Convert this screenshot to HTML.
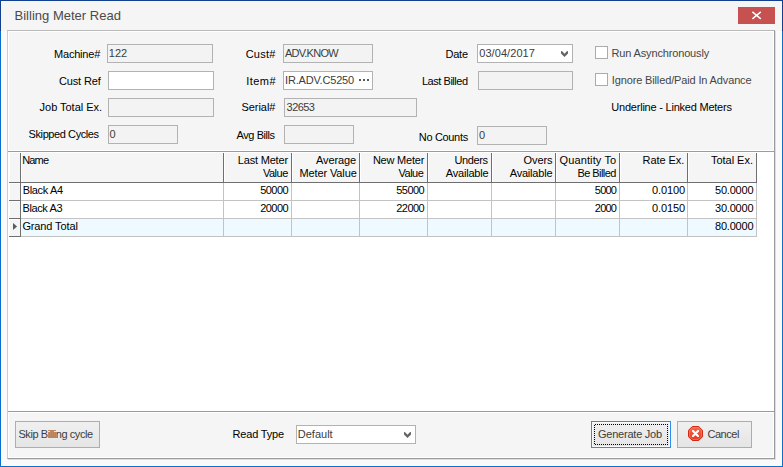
<!DOCTYPE html>
<html><head><meta charset="utf-8">
<style>
*{box-sizing:border-box;margin:0;padding:0}
html,body{width:783px;height:467px;overflow:hidden;background:#fafafa}
body{font-family:"Liberation Sans",sans-serif;font-size:11px;color:#000;position:relative}
.a{position:absolute}
.t{position:absolute;display:block;height:13px;line-height:13px;white-space:nowrap;font-size:11px}
.inp{position:absolute;border:1px solid #b2b2b2;background:#f3f3f3}
.inp.w{background:#fff}
.cb{position:absolute;width:13px;height:13px;border:1px solid #ababab;background:#fff}
.btn{position:absolute;height:27px;border:1px solid #adadad;background:linear-gradient(#f0f0f0,#e5e5e5)}
</style></head><body>
<!-- window frame -->
<div class="a" style="left:0;top:0;width:783px;height:31px;background:#f5f5f5"></div>
<div class="a" style="left:0;top:31px;width:783px;height:436px;background:#fafafa"></div>
<div class="a" style="left:1px;top:31px;width:781px;height:435px;border:1px solid #fff;border-top:0"></div>
<div class="a" style="left:0;top:0;width:783px;height:1px;background:#12408f"></div>
<div class="a" style="left:0;top:0;width:1px;height:31px;background:#12408f"></div>
<div class="a" style="left:0;top:31px;width:1px;height:436px;background:#0b6fd1"></div>
<div class="a" style="left:782px;top:0;width:1px;height:31px;background:#12408f"></div>
<div class="a" style="left:782px;top:31px;width:1px;height:436px;background:#0b6fd1"></div>
<div class="a" style="left:0;top:466px;width:783px;height:1px;background:#0b6fd1"></div>
<div class="a" style="left:738px;top:7px;width:37px;height:17px;background:#c75050"><svg width="37" height="17" viewBox="0 0 37 17" style="display:block"><path d="M14.4 4.8 L22.8 11.8 M22.8 4.8 L14.4 11.8" stroke="#fff" stroke-width="1.5" fill="none"/></svg></div>
<!-- panel: shadow, border, inner white -->
<div class="a" style="left:8px;top:31px;width:768px;height:429px;background:#dedede"></div>
<div class="a" style="left:7px;top:30px;width:768px;height:429px;background:#f5f5f5;border:1px solid #9a9a9a;border-top-color:#b9b9b9;border-left-color:#cdcdcd"></div>
<div class="a" style="left:8px;top:31px;width:766px;height:427px;border:1px solid #fff"></div>
<div class="inp" style="left:107px;top:44px;width:106px;height:19px"></div>
<div class="inp w" style="left:108px;top:71px;width:106px;height:19px"></div>
<div class="inp" style="left:108px;top:98px;width:106px;height:19px"></div>
<div class="inp" style="left:108px;top:125px;width:70px;height:19px"></div>
<div class="inp" style="left:283px;top:44px;width:90px;height:19px"></div>
<div class="inp w" style="left:283px;top:71px;width:90px;height:19px"></div>
<div class="inp" style="left:284px;top:98px;width:133px;height:19px"></div>
<div class="inp" style="left:284px;top:125px;width:70px;height:19px"></div>
<div class="inp w" style="left:477px;top:44px;width:96px;height:19px"></div>
<div class="inp" style="left:478px;top:71px;width:95px;height:19px"></div>
<div class="inp" style="left:477px;top:126px;width:70px;height:19px"></div>
<div class="inp w" style="left:296px;top:425px;width:120px;height:19px"></div>
<svg class="a" style="left:561px;top:51px" width="7" height="6" viewBox="0 0 7 6"><path d="M0 0.2 L0.9 0 L3.5 2.7 L6.1 0 L7 0.2 L7 2.5 L3.5 6 L0 2.5 Z" fill="#646464"/></svg>
<svg class="a" style="left:404px;top:432px" width="7" height="6" viewBox="0 0 7 6"><path d="M0 0.2 L0.9 0 L3.5 2.7 L6.1 0 L7 0.2 L7 2.5 L3.5 6 L0 2.5 Z" fill="#646464"/></svg>
<div class="a" style="left:359px;top:79px;width:2px;height:2px;background:#5a5a5a"></div>
<div class="a" style="left:363px;top:79px;width:2px;height:2px;background:#5a5a5a"></div>
<div class="a" style="left:367px;top:79px;width:2px;height:2px;background:#5a5a5a"></div>
<div class="cb" style="left:595px;top:46px"></div>
<div class="cb" style="left:595px;top:73px"></div>
<!-- grid -->
<div class="a" style="left:8px;top:151px;width:766px;height:260px;background:#fff"></div>
<div class="a" style="left:8px;top:150px;width:766px;height:1px;background:#fff"></div>
<div class="a" style="left:8px;top:151px;width:766px;height:1px;background:#9c9c9c"></div>
<div class="a" style="left:10px;top:153px;width:746px;height:29px;background:#f5f5f5"></div>
<div class="a" style="left:21px;top:219px;width:735px;height:17px;background:#eefaff"></div>
<div class="a" style="left:10px;top:183px;width:10px;height:53px;background:#f5f5f5"></div>
<div class="a" style="left:9px;top:182px;width:748px;height:1px;background:#6f6f6f"></div>
<div class="a" style="left:21px;top:200px;width:736px;height:1px;background:#c3c3c3"></div>
<div class="a" style="left:9px;top:200px;width:12px;height:1px;background:#6f6f6f"></div>
<div class="a" style="left:21px;top:218px;width:736px;height:1px;background:#c3c3c3"></div>
<div class="a" style="left:9px;top:218px;width:12px;height:1px;background:#6f6f6f"></div>
<div class="a" style="left:21px;top:236px;width:736px;height:1px;background:#c3c3c3"></div>
<div class="a" style="left:9px;top:236px;width:12px;height:1px;background:#6f6f6f"></div>
<div class="a" style="left:9px;top:183px;width:11px;height:1px;background:#fff"></div>
<div class="a" style="left:9px;top:201px;width:11px;height:1px;background:#fff"></div>
<div class="a" style="left:9px;top:219px;width:11px;height:1px;background:#fff"></div>
<div class="a" style="left:20px;top:153px;width:1px;height:30px;background:#6f6f6f"></div>
<div class="a" style="left:21px;top:153px;width:1px;height:29px;background:#fff"></div>
<div class="a" style="left:20px;top:183px;width:1px;height:54px;background:#6f6f6f"></div>
<div class="a" style="left:223px;top:153px;width:1px;height:30px;background:#6f6f6f"></div>
<div class="a" style="left:224px;top:153px;width:1px;height:29px;background:#fff"></div>
<div class="a" style="left:223px;top:183px;width:1px;height:54px;background:#c3c3c3"></div>
<div class="a" style="left:291px;top:153px;width:1px;height:30px;background:#6f6f6f"></div>
<div class="a" style="left:292px;top:153px;width:1px;height:29px;background:#fff"></div>
<div class="a" style="left:291px;top:183px;width:1px;height:54px;background:#c3c3c3"></div>
<div class="a" style="left:359px;top:153px;width:1px;height:30px;background:#6f6f6f"></div>
<div class="a" style="left:360px;top:153px;width:1px;height:29px;background:#fff"></div>
<div class="a" style="left:359px;top:183px;width:1px;height:54px;background:#c3c3c3"></div>
<div class="a" style="left:427px;top:153px;width:1px;height:30px;background:#6f6f6f"></div>
<div class="a" style="left:428px;top:153px;width:1px;height:29px;background:#fff"></div>
<div class="a" style="left:427px;top:183px;width:1px;height:54px;background:#c3c3c3"></div>
<div class="a" style="left:491px;top:153px;width:1px;height:30px;background:#6f6f6f"></div>
<div class="a" style="left:492px;top:153px;width:1px;height:29px;background:#fff"></div>
<div class="a" style="left:491px;top:183px;width:1px;height:54px;background:#c3c3c3"></div>
<div class="a" style="left:555px;top:153px;width:1px;height:30px;background:#6f6f6f"></div>
<div class="a" style="left:556px;top:153px;width:1px;height:29px;background:#fff"></div>
<div class="a" style="left:555px;top:183px;width:1px;height:54px;background:#c3c3c3"></div>
<div class="a" style="left:619px;top:153px;width:1px;height:30px;background:#6f6f6f"></div>
<div class="a" style="left:620px;top:153px;width:1px;height:29px;background:#fff"></div>
<div class="a" style="left:619px;top:183px;width:1px;height:54px;background:#c3c3c3"></div>
<div class="a" style="left:687px;top:153px;width:1px;height:30px;background:#6f6f6f"></div>
<div class="a" style="left:688px;top:153px;width:1px;height:29px;background:#fff"></div>
<div class="a" style="left:687px;top:183px;width:1px;height:54px;background:#c3c3c3"></div>
<div class="a" style="left:756px;top:153px;width:1px;height:30px;background:#6f6f6f"></div>
<div class="a" style="left:756px;top:183px;width:1px;height:54px;background:#c3c3c3"></div>
<svg class="a" style="left:12px;top:222px" width="6" height="9" viewBox="0 0 6 9"><path d="M1 0.9 L5.1 4.5 L1 8.1 Z" fill="#5c5c5c"/></svg>
<div class="a" style="left:8px;top:411px;width:766px;height:1px;background:#9c9c9c"></div>
<div class="a" style="left:8px;top:412px;width:766px;height:1px;background:#fff"></div>
<!-- buttons -->
<div class="btn" style="left:15px;top:421px;width:85px"></div>
<div class="btn" style="left:591px;top:421px;width:80px;border-color:#2f8cf0;box-shadow:inset 0 0 0 1px #f7f9fb"></div>
<div class="a" style="left:595px;top:424px;width:73px;height:1px;background:repeating-linear-gradient(to right,#000 0,#000 1px,transparent 1px,transparent 2px)"></div>
<div class="a" style="left:595px;top:444px;width:73px;height:1px;background:repeating-linear-gradient(to right,#000 0,#000 1px,transparent 1px,transparent 2px)"></div>
<div class="a" style="left:594px;top:425px;width:1px;height:19px;background:repeating-linear-gradient(to bottom,#000 0,#000 1px,transparent 1px,transparent 2px)"></div>
<div class="a" style="left:667px;top:424px;width:1px;height:21px;background:repeating-linear-gradient(to bottom,#000 0,#000 1px,transparent 1px,transparent 2px)"></div>
<div class="btn" style="left:677px;top:421px;width:75px"></div>
<svg class="a" style="left:688px;top:426px" width="15" height="16" viewBox="0 0 15 16">
<defs><linearGradient id="rg" x1="0" y1="0" x2="0" y2="1"><stop offset="0" stop-color="#f5664c"/><stop offset="1" stop-color="#e4321a"/></linearGradient></defs>
<path d="M4.3 1 H10.7 L14.5 4.8 V11.2 L10.7 15 H4.3 L0.5 11.2 V4.8 Z" fill="#d8d8d8" opacity="0.6"/>
<path d="M4.3 0.5 H10.7 L14.5 4.3 V10.7 L10.7 14.5 H4.3 L0.5 10.7 V4.3 Z" fill="url(#rg)" stroke="#d22a12" stroke-width="1"/>
<path d="M4.8 1.6 H10.2 L13.4 4.8 V10.2 L10.2 13.4 H4.8 L1.6 10.2 V4.8 Z" fill="none" stroke="#f98a74" stroke-width="0.9" opacity="0.75"/>
<path d="M5 5 L10 10 M10 5 L5 10" stroke="#fff" stroke-width="2.3" stroke-linecap="round"/>
</svg>
<span class="t" style="left:14.5px;top:9px;letter-spacing:0.01px;font-size:13px;color:#4a4a4a">Billing Meter Read</span>
<span class="t" style="left:54.0px;top:48px;letter-spacing:-0.2px">Machine#</span>
<span class="t" style="left:58.9px;top:75px;letter-spacing:-0.11px">Cust Ref</span>
<span class="t" style="left:39.6px;top:101px;letter-spacing:-0.03px">Job Total Ex.</span>
<span class="t" style="left:28.6px;top:128px;letter-spacing:-0.41px">Skipped Cycles</span>
<span class="t" style="left:245.7px;top:48px;letter-spacing:0.23px">Cust#</span>
<span class="t" style="left:246.2px;top:75px;letter-spacing:0.48px">Item#</span>
<span class="t" style="left:241.5px;top:101px;letter-spacing:-0.05px">Serial#</span>
<span class="t" style="left:236.6px;top:129px;letter-spacing:-0.44px">Avg Bills</span>
<span class="t" style="left:445.4px;top:48px;letter-spacing:-0.2px">Date</span>
<span class="t" style="left:421.9px;top:75px;letter-spacing:-0.45px">Last Billed</span>
<span class="t" style="left:418.8px;top:131px;letter-spacing:-0.33px">No Counts</span>
<span class="t" style="left:611.5px;top:47px;letter-spacing:-0.15px;color:#454545">Run Asynchronously</span>
<span class="t" style="left:611.8px;top:74px;letter-spacing:-0.14px;color:#454545">Ignore Billed/Paid In Advance</span>
<span class="t" style="left:611.3px;top:101px;letter-spacing:-0.22px">Underline - Linked Meters</span>
<span class="t" style="left:232.5px;top:428px;letter-spacing:-0.17px">Read Type</span>
<span class="t" style="left:108.8px;top:47px;color:#3c3c3c">122</span>
<span class="t" style="left:109.5px;top:128px;color:#3c3c3c">0</span>
<span class="t" style="left:285.0px;top:47px;letter-spacing:-0.76px;color:#3c3c3c">ADV.KNOW</span>
<span class="t" style="left:285.0px;top:74px;letter-spacing:-0.18px;color:#3c3c3c">IR.ADV.C5250</span>
<span class="t" style="left:286.6px;top:101px;letter-spacing:-0.58px;color:#3c3c3c">32653</span>
<span class="t" style="left:479.2px;top:47px;letter-spacing:0.07px;color:#3c3c3c">03/04/2017</span>
<span class="t" style="left:478.9px;top:129px;color:#3c3c3c">0</span>
<span class="t" style="left:297.8px;top:428px;color:#3c3c3c">Default</span>
<span class="t" style="left:18.4px;top:428px;letter-spacing:-0.42px;color:#3c3c3c">Skip Billing cycle</span>
<span class="t" style="left:598.0px;top:428px;letter-spacing:-0.23px;color:#3c3c3c">Generate Job</span>
<span class="t" style="left:707.5px;top:428px;letter-spacing:-0.48px;color:#3c3c3c">Cancel</span>
<span class="t" style="left:22.2px;top:154px;letter-spacing:-0.83px">Name</span>
<span class="t" style="left:237.8px;top:154px;letter-spacing:-0.19px">Last Meter</span>
<span class="t" style="left:262.9px;top:167px;letter-spacing:-0.47px">Value</span>
<span class="t" style="left:316.1px;top:154px;letter-spacing:-0.12px">Average</span>
<span class="t" style="left:299.4px;top:167px;letter-spacing:-0.11px">Meter Value</span>
<span class="t" style="left:372.9px;top:154px;letter-spacing:-0.21px">New Meter</span>
<span class="t" style="left:398.4px;top:167px;letter-spacing:-0.45px">Value</span>
<span class="t" style="left:454.5px;top:154px;letter-spacing:-0.4px">Unders</span>
<span class="t" style="left:445.8px;top:167px;letter-spacing:-0.2px">Available</span>
<span class="t" style="left:523.6px;top:154px;letter-spacing:-0.1px">Overs</span>
<span class="t" style="left:509.7px;top:167px;letter-spacing:-0.2px">Available</span>
<span class="t" style="left:559.5px;top:154px;letter-spacing:0.12px">Quantity To</span>
<span class="t" style="left:577.4px;top:167px;letter-spacing:-0.56px">Be Billed</span>
<span class="t" style="left:642.5px;top:154px;letter-spacing:-0.06px">Rate Ex.</span>
<span class="t" style="left:711.0px;top:154px;letter-spacing:-0.03px">Total Ex.</span>
<span class="t" style="left:22.8px;top:184px;letter-spacing:-0.36px">Black A4</span>
<span class="t" style="left:22.6px;top:202px;letter-spacing:-0.41px">Black A3</span>
<span class="t" style="left:22.4px;top:220px;letter-spacing:-0.12px">Grand Total</span>
<span class="t" style="left:260.2px;top:184px;letter-spacing:-0.55px">50000</span>
<span class="t" style="left:260.2px;top:202px;letter-spacing:-0.55px">20000</span>
<span class="t" style="left:396.3px;top:184px;letter-spacing:-0.55px">55000</span>
<span class="t" style="left:396.3px;top:202px;letter-spacing:-0.55px">22000</span>
<span class="t" style="left:594.8px;top:184px;letter-spacing:-0.77px">5000</span>
<span class="t" style="left:594.8px;top:202px;letter-spacing:-0.77px">2000</span>
<span class="t" style="left:652.1px;top:184px;letter-spacing:-0.14px">0.0100</span>
<span class="t" style="left:652.1px;top:202px;letter-spacing:-0.14px">0.0150</span>
<span class="t" style="left:715.0px;top:184px;letter-spacing:-0.2px">50.0000</span>
<span class="t" style="left:715.0px;top:202px;letter-spacing:-0.2px">30.0000</span>
<span class="t" style="left:715.0px;top:220px;letter-spacing:-0.2px">80.0000</span>
</body></html>
